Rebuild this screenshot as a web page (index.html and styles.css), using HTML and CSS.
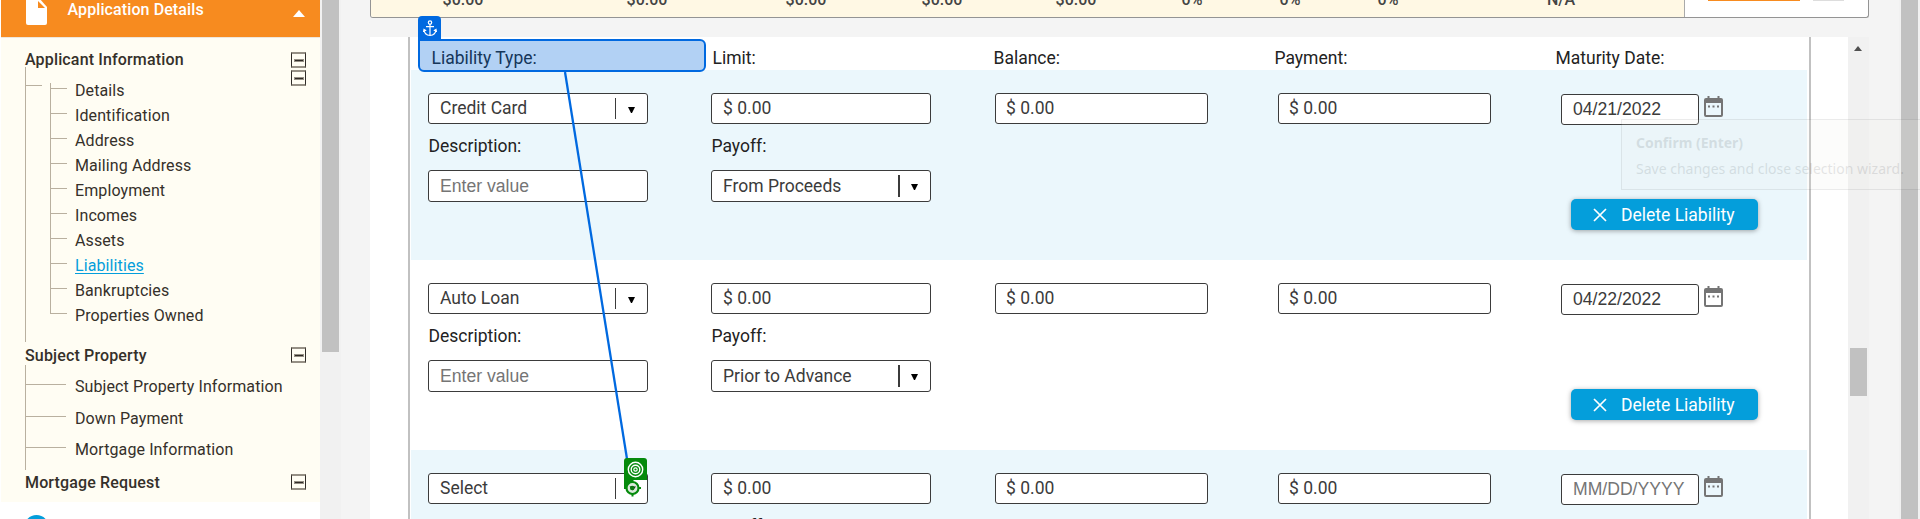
FILE: index.html
```html
<!DOCTYPE html>
<html lang="en">
<head>
<meta charset="utf-8">
<title>Application Details</title>
<link rel="stylesheet" href="styles.css">
</head>
<body>
<svg width="0" height="0" class="defs">
  <symbol id="cal" viewBox="0 0 19 21"><path d="M2 2h1.500V0h2v2h8V0h2v2H17q2 0 2 2v15q0 2-2 2H2q-2 0-2-2V4q0-2 2-2zM2 7v12h15V7z" fill="#757575" fill-rule="evenodd"/><path d="M4 9.500h2v2H4zM8.500 9.500h2v2h-2zM13 9.500h2v2h-2z" fill="#757575"/></symbol>
  <symbol id="x" viewBox="0 0 14 14"><path d="M1 1l12 12M13 1L1 13" stroke="#fff" stroke-width="1.700"/></symbol>
</svg>
<div class="app">
  <nav class="side">
    <div class="side-head">
      <svg class="doc" width="21" height="27" viewBox="0 0 21 27"><path d="M2 0H13L21 9V25q0 2-2 2H2q-2 0-2-2V2q0-2 2-2z" fill="#fff"/><path d="M12 3v7h7z" fill="#f78b1f"/></svg>
      <span class="side-title">Application Details</span>
      <i class="up"></i>
    </div>
    <div class="tree">
      <div class="sec first"><b>Applicant Information</b><i class="tog"></i></div>
      <div class="branch app-branch">
        <i class="stub"></i>
        <ul class="inner">
          <li>Details</li><li>Identification</li><li>Address</li><li>Mailing Address</li><li>Employment</li><li>Incomes</li><li>Assets</li><li><a>Liabilities</a></li><li>Bankruptcies</li><li>Properties Owned</li>
        </ul>
        <i class="tog tog2"></i>
      </div>
      <div class="sec"><b>Subject Property</b><i class="tog"></i></div>
      <ul class="branch wide">
        <li>Subject Property Information</li><li>Down Payment</li><li>Mortgage Information</li>
      </ul>
      <div class="sec last"><b>Mortgage Request</b><i class="tog"></i></div>
    </div>
    <div class="dot"></div>
  </nav>
  <div class="sbar left"><i></i></div>
  <main class="main">
    <div class="summary">
      <div class="nums"><span>$0.00</span><span>$0.00</span><span>$0.00</span><span>$0.00</span><span>$0.00</span><span>0%</span><span>0%</span><span>0%</span><span>N/A</span></div>
      <div class="acts"><i class="o"></i><i class="g"></i></div>
    </div>
    <div class="panel">
      <div class="sheet">
        <div class="heads"><span>Liability Type:</span><span>Limit:</span><span>Balance:</span><span>Payment:</span><span>Maturity Date:</span></div>
        <div class="row blue">
          <div class="f sel thin">Credit Card</div><div class="f">$ 0.00</div><div class="f s">$ 0.00</div><div class="f s">$ 0.00</div>
          <div class="date"><div class="f d">04/21/2022</div><svg width="19" height="21"><use href="#cal"/></svg></div>
          <label>Description:</label><label class="pay">Payoff:</label>
          <div class="f t e">Enter value</div><div class="f t sel">From Proceeds</div>
          <div class="del"><svg width="14" height="14"><use href="#x"/></svg>Delete Liability</div>
        </div>
        <div class="row">
          <div class="f sel thin">Auto Loan</div><div class="f">$ 0.00</div><div class="f s">$ 0.00</div><div class="f s">$ 0.00</div>
          <div class="date"><div class="f d">04/22/2022</div><svg width="19" height="21"><use href="#cal"/></svg></div>
          <label>Description:</label><label class="pay">Payoff:</label>
          <div class="f t e">Enter value</div><div class="f t sel">Prior to Advance</div>
          <div class="del"><svg width="14" height="14"><use href="#x"/></svg>Delete Liability</div>
        </div>
        <div class="row blue">
          <div class="f sel thin">Select</div><div class="f">$ 0.00</div><div class="f s">$ 0.00</div><div class="f s">$ 0.00</div>
          <div class="date"><div class="f d e">MM/DD/YYYY</div><svg width="19" height="21"><use href="#cal"/></svg></div>
          <label>Description:</label><label class="pay">Payoff:</label>
        </div>
      </div>
      <div class="sbar in"><u></u><i></i></div>
    </div>
  </main>
  <div class="sbar right"><i></i></div>
</div>
<!-- Selection wizard overlay -->
<div class="hl"></div>
<div class="anchor"><svg width="14" height="17" viewBox="0 0 14 17" fill="none" stroke="#fff" stroke-width="1.200"><circle cx="7" cy="2.600" r="1.700"/><path d="M7 4.300V15.500M3 6.700h8M1 9.500q.3 5.500 6 6q5.700-.5 6-6M.5 12l.5-2.500 2.200 1.300M13.500 12L13 9.500l-2.200 1.300"/></svg></div>
<svg class="wire" width="1920" height="519"><path d="M565 72L627.500 462" stroke="#0069e0" stroke-width="2.300"/></svg>
<div class="target">
  <svg width="23" height="39" viewBox="0 0 23 39" fill="none">
    <path d="M0 22h9.500v7H0z" fill="#058a0c"/>
    <circle cx="8.500" cy="30" r="6" fill="#dcebdc" stroke="#058a0c" stroke-width="2.200"/>
    <path d="M14.500 30H17M8.500 36v2.500M0 30h2.500" stroke="#058a0c" stroke-width="2"/>
    <path d="M5.500 28.500h6.500l-3.200 4z" fill="#222"/><circle cx="8.200" cy="30" r="2.300" fill="#0b7a10"/>
    <path d="M0 22V3q0-3 3-3h17q3 0 3 3v19z" fill="#058a0c"/>
    <g stroke="#fff" stroke-width="1.400"><circle cx="11.500" cy="11.500" r="7.200"/><circle cx="11.500" cy="11.500" r="4.300"/></g><circle cx="11.500" cy="11.500" r="1.700" stroke="#fff" stroke-width="1.200"/>
  </svg>
</div>
<div class="tip"><b>Confirm (Enter)</b><span>Save changes and close selection wizard.</span></div>
</body>
</html>
```
FILE: styles.css
```css
*, *::before, *::after { box-sizing: border-box; }
body { margin: 0; width: 1920px; height: 519px; overflow: hidden; position: relative; background: #f4f4f4; font-family: Roboto, "Liberation Sans", sans-serif; color: #222; }
ul { list-style: none; margin: 0; padding: 0; }
.defs { position: absolute; }
.app { display: flex; height: 519px; }
.side { width: 320px; flex: none; background: #fff; overflow: hidden; padding-left: 1px; }
.side-head { height: 37px; background: #f78b1f; display: flex; align-items: flex-start; padding-left: 25px; color: #fff; }
.doc { margin-top: -2px; flex: none; }
.side-title { margin-left: 20.500px; font-size: 16px; font-weight: 500; letter-spacing: .1px; line-height: 20px; width: 225.500px; }
.up { margin-top: 10px; border: 6.500px solid transparent; border-top: 0; border-bottom: 7px solid #fff; }
.tree { background: #fffdf3; height: 465px; padding-left: 24px; color: #35302a; font-size: 16px; border-top: 1px solid #eee6dc; }
.sec { display: flex; justify-content: space-between; align-items: center; padding-right: 14px; height: 23px; padding-top: 3px; }
.sec b { font-weight: 500; letter-spacing: .15px; }
.first { margin-top: 10px; height: 20px; padding-top: 4px; }
.first b { margin-top: -2px; }
.tog { width: 15px; height: 16px; border: 1px solid #302c28; border-top: 2px solid #969085; border-bottom: 2px solid #969085; display: flex; align-items: center; justify-content: center; flex: none; }
.tog::after { content: ""; width: 10px; height: 3px; background: #302c28; border: 1px solid #969085; }
.branch { border-left: 1px solid #b9b09f; }
.app-branch { height: 275px; display: flex; margin-top: -1px; }
.stub { width: 16px; height: 1px; background: #b9b09f; margin: 18px 8px 0 0; }
.inner { margin-top: 16px; width: 225px; height: 231px; border-left: 1px solid #b9b09f; letter-spacing: .1px; }
.inner li { height: 25px; line-height: 16px; display: flex; gap: 8px; white-space: nowrap; }
.inner li::before, .wide li::before { content: ""; height: 1px; width: 16px; background: #b9b09f; margin-top: 5px; flex: none; }
.inner a { color: #049edb; text-decoration: underline; text-underline-offset: 2px; }
.tog2 { margin: 3px 0 0 16px; }
.wide { height: 105px; padding-top: 14px; letter-spacing: .1px; }
.wide li { height: 31.500px; line-height: 16px; display: flex; gap: 9px; }
.wide li::before { width: 40px; }
.last { height: 21px; }
.dot { width: 25px; height: 25px; border-radius: 50%; background: #049edb; margin: 13px 0 0 23px; }
.sbar { background: #f1f1f1; flex: none; width: 21px; }
.sbar i { display: block; background: #c1c1c1; width: 17px; margin-left: 2px; }
.left i { height: 352px; }
.main { width: 1528px; margin-left: 29px; height: 519px; flex: none; }
.summary { width: 1499px; height: 18px; border: 1px solid #949494; border-top: 0; border-radius: 0 0 3px 3px; display: flex; background: #fff; overflow: hidden; }
.nums { width: 1315px; margin-left: -1px; background: #fff8e4; border-right: 1px solid #aaa; display: grid; grid-template-columns: 186px 182px 136px 136px 132px 100px 96px 100px 246px; text-align: center; font-size: 16px; font-weight: 500; color: #444; line-height: 19px; }
.nums span { margin-top: -10px; }
.acts { display: flex; padding-left: 23px; gap: 13px; }
.acts i { height: 1px; width: 92px; background: #f78b1f; }
.acts .g { width: 31px; background: #ddd; }
.panel { margin-top: 19px; display: flex; width: 1499px; height: 482px; background: #fff; overflow: hidden; }
.sheet { margin-left: 38px; width: 1403px; border: solid #c1c1c1; border-width: 0 2px; padding-left: 1px; padding-right: 2px; flex: none; height: 800px; }
.heads { height: 33px; display: grid; grid-template-columns: repeat(5, 281px); padding-left: 20.500px; font-size: 17.500px; line-height: 42px; white-space: nowrap; }
.row { height: 190px; padding: 23px 0 0 17px; display: grid; grid-template-columns: 283px 284px repeat(3, 283px); position: relative; width: 1396px; overflow: hidden; grid-template-rows: 31px 46px 32px 1fr; align-items: start; font-size: 17.500px; }
.blue { background: #ebf7fc; }
.f { width: 220px; height: 31px; border: 1px solid #3b3b3b; border-radius: 3px; background: #fff; padding-left: 11px; line-height: 28px; color: #3b3b3b; white-space: nowrap; display: flex; }
.s { width: 213px; padding-left: 10px; }
.t { height: 32px; line-height: 30px; grid-row: 3; }
.d, .e { font-family: "Liberation Sans", Arial, sans-serif; font-size: 17.600px; }
.d { width: 138px; }
.e { color: #757575; }
.sel::before { content: ""; order: 1; margin-left: auto; width: 2px; height: 22px; background: #3b3b3b; margin-top: 4px; }
.thin::before { width: 1px; height: 21px; }
.sel::after { content: ""; order: 2; border: 3.500px solid transparent; border-top: 6px solid #000; border-bottom: 0; margin: 13px 12px 0 11px; height: 6px; width: 7px; flex: none; }
.thin::after { margin-left: 12px; }
.date { display: flex; gap: 5px; padding-top: 1px; }
.date svg { margin-top: 2px; }
label { grid-row: 2; margin: 10px 0 0 .5px; line-height: 24px; color: #222; }
.pay { grid-column: 2; }
.del { grid-column: 5; grid-row: 3 / 5; margin: 29px 0 0 10px; width: 187px; height: 31px; border-radius: 5px; background: #049edb; color: #fff; display: flex; align-items: center; gap: 14px; padding-left: 22px; box-shadow: 0 1px 5px rgba(0,0,0,.35); white-space: nowrap; }
.in u { display: block; width: 0; margin: 9px 0 0 6px; border: 4.500px solid transparent; border-top: 0; border-bottom: 5px solid #505050; }
.in { margin-left: auto; }
.in i { height: 48px; margin-top: 297px; }
.right { width: 21px; margin-left: auto; flex: none; }
.right i { height: 519px; }
.hl { position: absolute; left: 418px; top: 39px; width: 288px; height: 33px; border: 2px solid #0069e0; border-radius: 0 6px 6px 6px; background: rgba(0,103,220,.3); }
.anchor { position: absolute; left: 418px; top: 16px; width: 23px; height: 24px; background: #0069e0; border-radius: 4px 4px 0 0; padding: 4px 0 0 4.500px; }
.anchor svg, .target svg { display: block; }
.wire { position: absolute; left: 0; top: 0; }
.target { position: absolute; left: 624px; top: 458px; }
.tip { position: absolute; left: 1621px; top: 119px; width: 299px; height: 71px; border: 1px solid #777; background: #efefea; opacity: .14; font-family: "Noto Sans", "Open Sans", sans-serif; font-size: 14px; padding: 12px 0 0 14px; display: flex; flex-direction: column; gap: 4px; line-height: 22px; white-space: nowrap; color: #444; border-right: 0; }
```
